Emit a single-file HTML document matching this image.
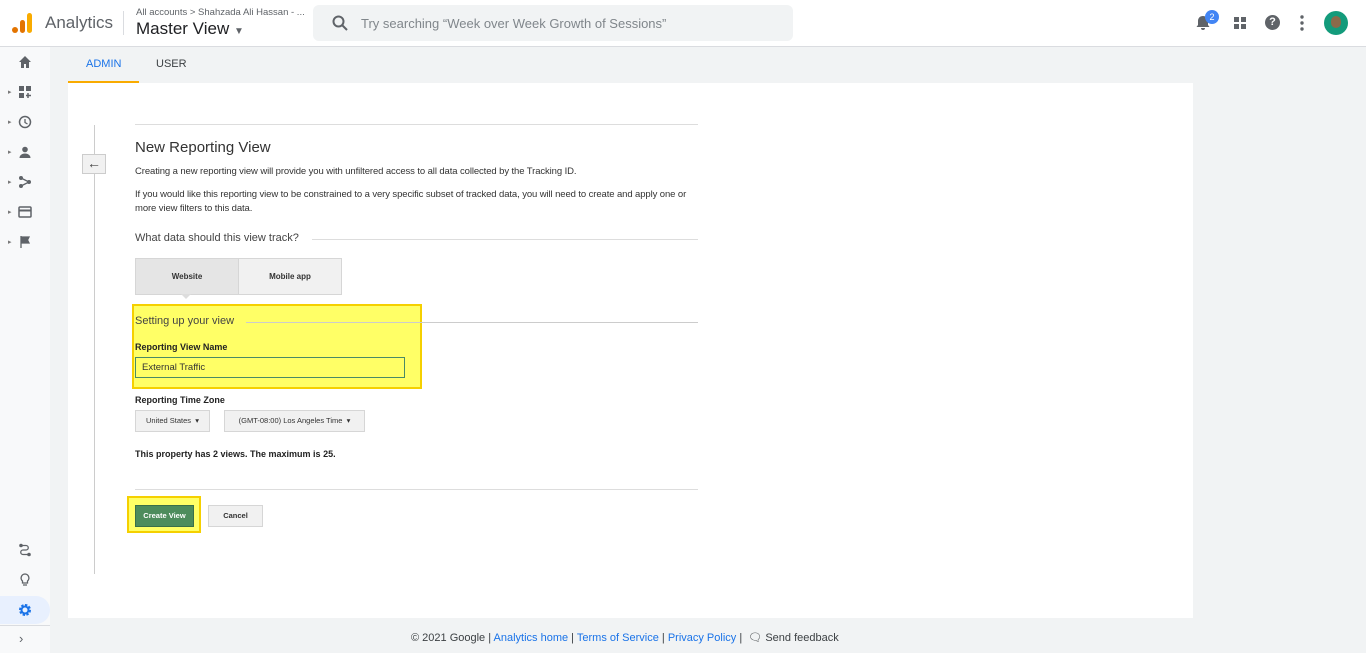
<!DOCTYPE html>
<html><head><meta charset="utf-8"><style>
*{box-sizing:border-box;margin:0;padding:0}
body{width:1366px;height:653px;overflow:hidden;background:#f1f3f4;font-family:"Liberation Sans",Arial,sans-serif;color:#222;position:relative}
.abs{position:absolute}
#hdr{left:0;top:0;width:1366px;height:47px;background:#fff;border-bottom:1px solid #dadce0}
#side{left:0;top:47px;width:50px;height:606px;background:#f8f9fa}
.ic{position:absolute;left:18px;width:14px;height:14px}
.car{position:absolute;left:8px;font-size:7px;color:#777}
.btn{position:absolute;background:#f1f1f1;border:1px solid #d6d6d6;font-size:8px;font-weight:bold;color:#333;text-align:center}
</style></head><body>
<div id="hdr" class="abs">
 <svg class="abs" style="left:11px;top:12px" width="22" height="22"><circle cx="4" cy="18" r="3" fill="#e37400"/><rect x="9" y="8" width="5" height="13" rx="2.5" fill="#e37400"/><rect x="16" y="1" width="5" height="20" rx="2.5" fill="#f9ab00"/></svg>
 <div class="abs" style="left:45px;top:13px;font-size:17px;color:#5f6368">Analytics</div>
 <div class="abs" style="left:123px;top:11px;width:1px;height:24px;background:#dadce0"></div>
 <div class="abs" style="left:136px;top:7px;font-size:9.5px;color:#5f6368">All accounts &gt; Shahzada Ali Hassan - ...</div>
 <div class="abs" style="left:136px;top:19px;font-size:17px;color:#202124">Master View <span style="font-size:10px;color:#5f6368">▼</span></div>
 <div class="abs" style="left:313px;top:5px;width:480px;height:36px;background:#f1f3f4;border-radius:6px"></div>
 <svg class="abs" style="left:332px;top:15px" width="16" height="16"><circle cx="6.5" cy="6.5" r="5" fill="none" stroke="#5f6368" stroke-width="2"/><path d="M10 10l5 5" stroke="#5f6368" stroke-width="2"/></svg>
 <div class="abs" style="left:361px;top:16px;font-size:13px;color:#80868b">Try searching “Week over Week Growth of Sessions”</div>
 <svg class="abs" style="left:1196px;top:15px" width="14" height="16"><path d="M7 1c-3 0-5 2-5 5v4l-1.5 2h13L12 10V6c0-3-2-5-5-5zM5 13a2 2 0 004 0z" fill="#5f6368"/></svg>
 <div class="abs" style="left:1205px;top:10px;width:14px;height:14px;border-radius:7px;background:#4285f4;color:#fff;font-size:9px;text-align:center;line-height:14px">2</div>
 <svg class="abs" style="left:1234px;top:17px" width="12" height="12" fill="#5f6368"><rect width="5" height="5"/><rect x="7" width="5" height="5"/><rect y="7" width="5" height="5"/><rect x="7" y="7" width="5" height="5"/></svg>
 <div class="abs" style="left:1265px;top:15px;width:15px;height:15px;border-radius:8px;background:#5f6368;color:#fff;font-size:11px;font-weight:bold;text-align:center;line-height:15px">?</div>
 <svg class="abs" style="left:1300px;top:15px" width="4" height="16" fill="#5f6368"><circle cx="2" cy="2" r="1.7"/><circle cx="2" cy="8" r="1.7"/><circle cx="2" cy="14" r="1.7"/></svg>
 <div class="abs" style="left:1324px;top:11px;width:24px;height:24px;border-radius:12px;background:#139b7b;overflow:hidden"><div style="margin:5px 0 0 7px;width:10px;height:12px;border-radius:5px;background:#8a6a4a"></div></div>
</div>
<div id="side" class="abs">
 <svg class="ic" style="top:8px" viewBox="0 0 14 14"><path d="M7 1L1 7h2v6h3V9h2v4h3V7h2z" fill="#5f6368"/></svg>
 <span class="car" style="top:41px">▸</span><svg class="ic" style="top:38px" viewBox="0 0 14 14" fill="#5f6368"><rect x="1" y="1" width="5" height="5"/><rect x="8" y="1" width="5" height="5"/><rect x="1" y="8" width="5" height="5"/><path d="M10 8v5M8 10.5h5" stroke="#5f6368" stroke-width="1.5"/></svg>
 <span class="car" style="top:71px">▸</span><svg class="ic" style="top:68px" viewBox="0 0 14 14"><circle cx="7" cy="7" r="5.5" fill="none" stroke="#5f6368" stroke-width="1.5"/><path d="M7 4v3.5l2.5 1.5" stroke="#5f6368" fill="none" stroke-width="1.3"/></svg>
 <span class="car" style="top:101px">▸</span><svg class="ic" style="top:98px" viewBox="0 0 14 14" fill="#5f6368"><circle cx="7" cy="4.5" r="2.8"/><path d="M1.5 13c0-3 3-4.5 5.5-4.5s5.5 1.5 5.5 4.5z"/></svg>
 <span class="car" style="top:131px">▸</span><svg class="ic" style="top:128px" viewBox="0 0 14 14" fill="#5f6368"><circle cx="3" cy="3" r="2"/><circle cx="3" cy="11" r="2"/><circle cx="11" cy="7" r="2"/><path d="M3 3l8 4-8 4" stroke="#5f6368" fill="none" stroke-width="1.3"/></svg>
 <span class="car" style="top:161px">▸</span><svg class="ic" style="top:158px" viewBox="0 0 14 14"><rect x="1" y="2" width="12" height="10" rx="1" fill="none" stroke="#5f6368" stroke-width="1.5"/><path d="M1 5.5h12" stroke="#5f6368" stroke-width="2"/></svg>
 <span class="car" style="top:191px">▸</span><svg class="ic" style="top:188px" viewBox="0 0 14 14"><path d="M3 1v12M3 2h8l-1.5 3L11 8H3" fill="#5f6368" stroke="#5f6368" stroke-width="1.3"/></svg>
 <svg class="ic" style="top:496px" viewBox="0 0 14 14"><circle cx="3" cy="2.5" r="1.8" fill="#5f6368"/><circle cx="11" cy="11.5" r="1.8" fill="#5f6368"/><path d="M3 2.5h5a2.2 2.2 0 010 4.5H5a2.2 2.2 0 000 4.5h6" fill="none" stroke="#5f6368" stroke-width="1.3"/></svg>
 <svg class="ic" style="top:526px" viewBox="0 0 14 14"><path d="M7 1a4 4 0 00-2.5 7v2h5V8A4 4 0 007 1zM5 12h4" fill="none" stroke="#5f6368" stroke-width="1.3"/></svg>
 <div class="abs" style="left:0;top:549px;width:50px;height:28px;background:#e8f0fe;border-radius:0 14px 14px 0"></div>
 <svg class="ic" style="top:556px" viewBox="0 0 14 14"><circle cx="7" cy="7" r="4.5" fill="none" stroke="#1a73e8" stroke-width="3" stroke-dasharray="2.2 1.3"/><circle cx="7" cy="7" r="3.5" fill="none" stroke="#1a73e8" stroke-width="2"/></svg>
 <div class="abs" style="left:0;top:578px;width:50px;height:1px;background:#dadce0"></div>
 <div class="abs" style="left:19px;top:584px;font-size:13px;color:#5f6368">›</div>
</div>
<div class="abs" style="left:86px;top:58px;font-size:11px;color:#1a73e8">ADMIN</div>
<div class="abs" style="left:68px;top:81px;width:71px;height:2px;background:#f9ab00"></div>
<div class="abs" style="left:156px;top:58px;font-size:11px;color:#3c4043">USER</div>
<div class="abs" style="left:68px;top:83px;width:1125px;height:535px;background:#fff"></div>
<div class="abs" style="left:94px;top:125px;width:1px;height:449px;background:#ccc"></div>
<div class="abs" style="left:135px;top:124px;width:563px;height:1px;background:#ddd"></div>
<div class="abs" style="left:82px;top:154px;width:24px;height:20px;background:#f1f1f1;border:1px solid #ccc;font-size:14px;text-align:center;line-height:17px;color:#444">←</div>
<div class="abs" style="left:135px;top:139px;font-size:15px;color:#333">New Reporting View</div>
<div class="abs" style="left:135px;top:166px;font-size:9.5px;color:#333;letter-spacing:-0.1px">Creating a new reporting view will provide you with unfiltered access to all data collected by the Tracking ID.</div>
<div class="abs" style="left:135px;top:188px;font-size:9.5px;color:#333;line-height:14px;width:560px;letter-spacing:-0.1px">If you would like this reporting view to be constrained to a very specific subset of tracked data, you will need to create and apply one or more view filters to this data.</div>
<div class="abs" style="left:135px;top:232px;font-size:11px;color:#444">What data should this view track?</div>
<div class="abs" style="left:312px;top:239px;width:386px;height:1px;background:#ddd"></div>
<div class="btn" style="left:135px;top:258px;width:104px;height:37px;line-height:35px;background:#e5e5e5">Website</div>
<div class="btn" style="left:238px;top:258px;width:104px;height:37px;line-height:35px">Mobile app</div>
<div class="abs" style="left:181px;top:294px;width:0;height:0;border:5px solid transparent;border-top-color:#ddd"></div>
<div class="abs" style="left:132px;top:304px;width:290px;height:85px;background:#ffff66;border:2px solid #f5d000"></div>
<div class="abs" style="left:135px;top:315px;font-size:11px;color:#444">Setting up your view</div>
<div class="abs" style="left:246px;top:322px;width:452px;height:1px;background:#ccc"></div>
<div class="abs" style="left:135px;top:342px;font-size:9px;font-weight:bold;color:#222">Reporting View Name</div>
<div class="abs" style="left:135px;top:357px;width:270px;height:21px;border:1px solid #4a8a66;font-size:9.5px;padding:4px 6px;color:#333">External Traffic</div>
<div class="abs" style="left:135px;top:395px;font-size:9px;font-weight:bold;color:#222">Reporting Time Zone</div>
<div class="btn" style="left:135px;top:410px;width:75px;height:22px;line-height:20px;font-weight:normal;font-size:7.5px">United States &nbsp;▾</div>
<div class="btn" style="left:224px;top:410px;width:141px;height:22px;line-height:20px;font-weight:normal;font-size:7.5px">(GMT-08:00) Los Angeles Time &nbsp;▾</div>
<div class="abs" style="left:135px;top:449px;font-size:9px;font-weight:bold;color:#222">This property has 2 views. The maximum is 25.</div>
<div class="abs" style="left:135px;top:489px;width:563px;height:1px;background:#ddd"></div>
<div class="abs" style="left:127px;top:496px;width:74px;height:37px;background:#ffff66;border:2px solid #f5d000"></div>
<div class="abs" style="left:135px;top:505px;width:59px;height:22px;background:#4d8c5c;border:1px solid #3a6f48;color:#fff;font-size:7.5px;font-weight:bold;text-align:center;line-height:20px">Create View</div>
<div class="btn" style="left:208px;top:505px;width:55px;height:22px;line-height:20px;font-size:7.5px">Cancel</div>
<div class="abs" style="left:411px;top:631px;font-size:11px;color:#3c4043">© 2021 Google | <span style="color:#1a73e8">Analytics home</span> | <span style="color:#1a73e8">Terms of Service</span> | <span style="color:#1a73e8">Privacy Policy</span> | &nbsp;🗨 Send feedback</div>
</body></html>
